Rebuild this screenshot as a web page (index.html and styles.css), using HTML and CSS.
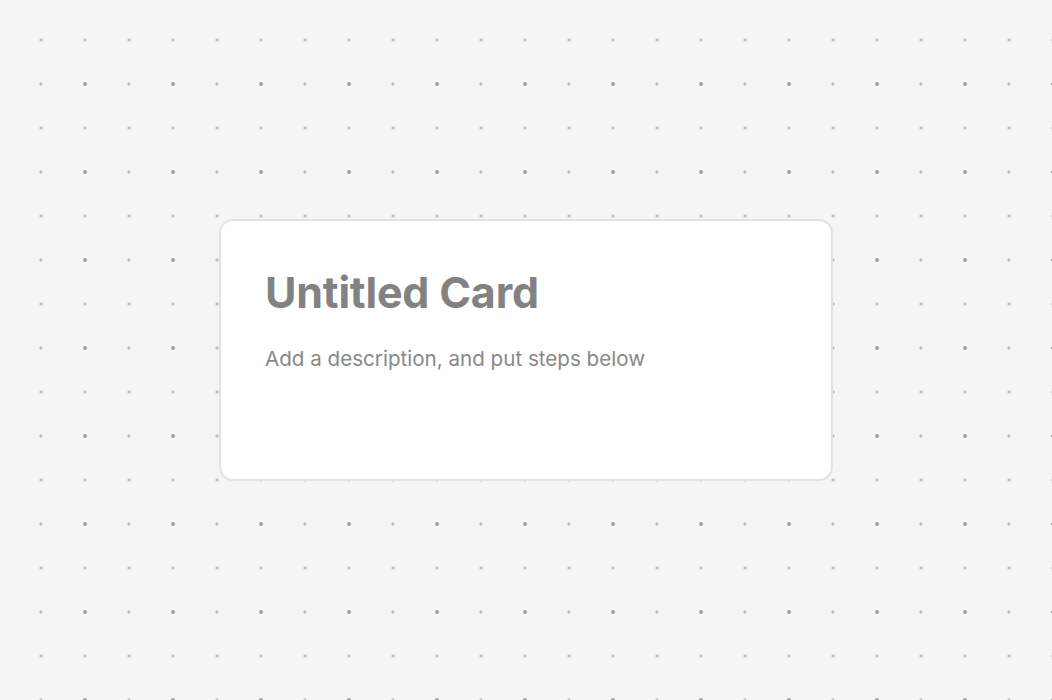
FILE: index.html
```html
<!DOCTYPE html>
<html>
<head>
<meta charset="utf-8">
<link rel="stylesheet" href="styles.css">
</head>
<body>
<div class="canvas">
  <div class="card">
    <h1 class="title">Untitled Card</h1>
    <p class="desc">Add a description, and put steps below</p>
  </div>
</div>
</body>
</html>
```
FILE: styles.css
```css
html, body {
  margin: 0;
  padding: 0;
}
body {
  font-family: Inter, "Noto Sans", sans-serif;
}
.canvas {
  width: 1052px;
  height: 700px;
  display: flex;
  align-items: center;
  justify-content: center;
  background-color: #f5f5f5;
  background-image:
    radial-gradient(circle, #a8a8a8 1.6px, transparent 2.3px),
    radial-gradient(circle, #bcbcbc 1.2px, transparent 1.9px);
  background-size: 88px 88px, 44px 44px;
  background-position: 41px 40px, 19px 18px;
}
.card {
  box-sizing: border-box;
  width: 614px;
  height: 262px;
  background: #ffffff;
  border: 2px solid #e3e3e3;
  border-radius: 14px;
  padding: 45px 44px 0 44px;
}
.title {
  margin: 0;
  font-size: 43px;
  font-weight: 700;
  color: #828282;
  line-height: 52px;
  letter-spacing: -0.2px;
}
.desc {
  margin: 28px 0 0 0;
  font-size: 20.6px;
  color: #888888;
  line-height: 26px;
}
```
